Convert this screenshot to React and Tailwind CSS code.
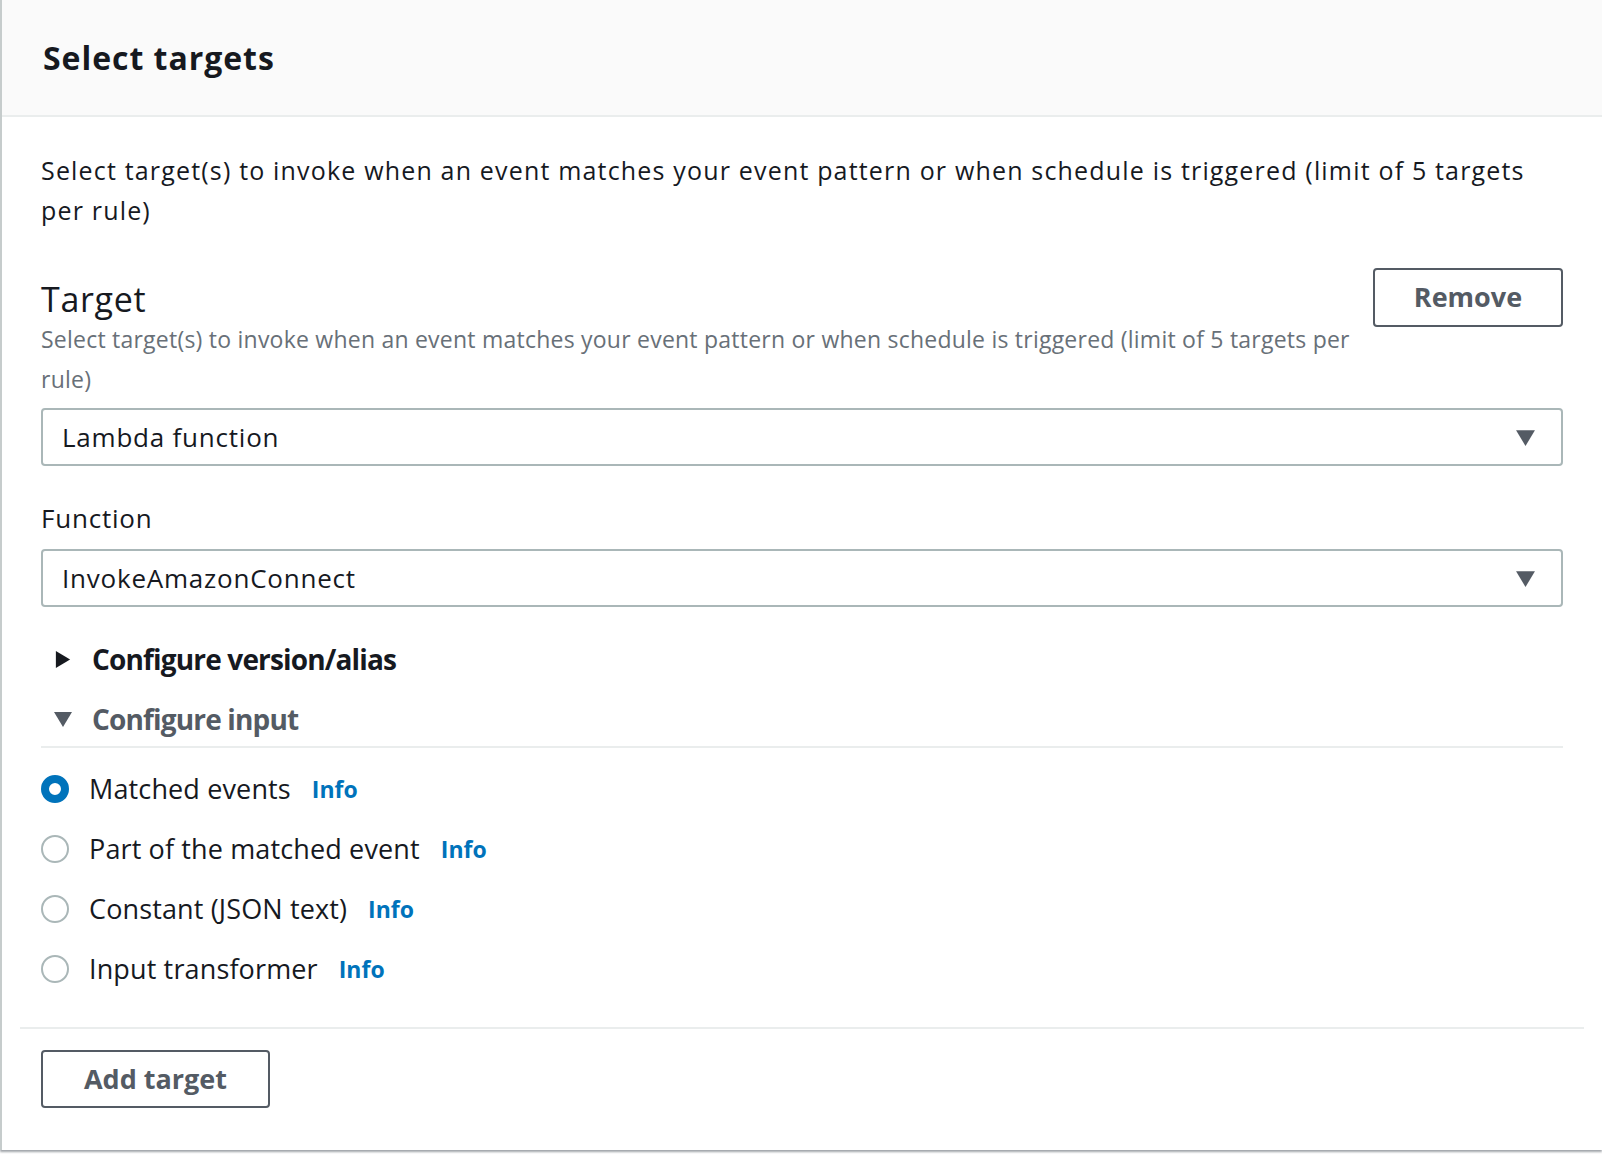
import React from 'react';

const Caret = ({ dir = 'down', className = '' }) => (
  <svg viewBox="0 0 20 20" className={className} aria-hidden="true">
    {dir === 'down' ? <path d="M1 3h18L10 18z" fill="currentColor" /> : <path d="M3 1v18l15-9z" fill="currentColor" />}
  </svg>
);

function Select({ value }) {
  return (
    <div className="h-[58px] flex items-center justify-between rounded-[4px] border-2 border-[#aab7b8] bg-white pl-[19px] pr-[25px]">
      <span className="text-[26px] tracking-[0.03em] text-[#16191f]">{value}</span>
      <Caret className="w-[21px] h-[21px] text-[#545b64]" />
    </div>
  );
}

function Radio({ label, checked }) {
  return (
    <div className="flex items-center h-[40px]">
      {checked ? (
        <span className="w-[28px] h-[28px] rounded-full border-[8px] border-[#0073bb] bg-white shrink-0" />
      ) : (
        <span className="w-[28px] h-[28px] rounded-full border-2 border-[#aab7b8] bg-white shrink-0" />
      )}
      <span className="ml-[20px] text-[27px] tracking-[0.005em] text-[#16191f]">{label}</span>
      <a className="ml-[21px] text-[23px] font-bold text-[#0073bb]">Info</a>
    </div>
  );
}

export default function App() {
  const options = [
    { label: 'Matched events', checked: true },
    { label: 'Part of the matched event' },
    { label: 'Constant (JSON text)' },
    { label: 'Input transformer' },
  ];

  return (
    <div className="w-[1602px] h-[1154px] bg-white font-['Open_Sans',sans-serif]">
      <div className="h-[1150px] flex flex-col border-l-2 border-[#c6cccc] shadow-[0_2px_2px_rgba(84,91,100,0.55)] bg-white">
        {/* header */}
        <div className="h-[117px] shrink-0 flex items-center px-[41px] bg-[#fafafa] border-b-2 border-[#eaeded]">
          <h2 className="text-[32px] font-bold tracking-[0.03em] text-[#16191f] leading-none">Select targets</h2>
        </div>

        {/* body */}
        <div className="px-[39px] pt-[33px]">
          <p className="text-[25px] leading-[40px] tracking-[0.047em] text-[#16191f]">
            Select target(s) to invoke when an event matches your event pattern or when schedule is triggered (limit of 5 targets per rule)
          </p>

          <div className="mt-[38px] flex justify-between items-start">
            <div className="flex-1 pt-[11px] pr-[6px]">
              <h3 className="text-[34px] leading-[40px] tracking-[0.02em] text-[#16191f]">Target</h3>
              <p className="text-[23px] leading-[40px] tracking-[0.01em] text-[#687078]">
                Select target(s) to invoke when an event matches your event pattern or when schedule is triggered (limit of 5 targets per rule)
              </p>
            </div>
            <button className="w-[190px] h-[59px] shrink-0 rounded-[4px] border-2 border-[#545b64] text-[27px] font-bold text-[#545b64]">
              Remove
            </button>
          </div>

          <div className="mt-[9px]">
            <Select value="Lambda function" />
          </div>

          <div className="mt-[32px] text-[26px] leading-[40px] tracking-[0.03em] text-[#16191f]">Function</div>
          <div className="mt-[11px]">
            <Select value="InvokeAmazonConnect" />
          </div>

          <div className="mt-[32px] flex items-center h-[40px]">
            <Caret dir="right" className="ml-[12px] w-[19px] h-[19px] text-[#16191f]" />
            <span className="ml-[20px] text-[28px] font-bold tracking-[-0.03em] text-[#16191f]">Configure version/alias</span>
          </div>
          <div className="mt-[20px] flex items-center h-[40px]">
            <Caret className="ml-[12px] w-[20px] h-[20px] text-[#545b64]" />
            <span className="ml-[19px] text-[28px] font-bold tracking-[-0.03em] text-[#545b64]">Configure input</span>
          </div>
          <div className="mt-[7px] h-[2px] bg-[#eaeded]" />

          <div className="mt-[21px] flex flex-col gap-[20px]">
            {options.map((o) => (
              <Radio key={o.label} label={o.label} checked={o.checked} />
            ))}
          </div>
        </div>

        {/* footer */}
        <div className="mt-[38px] mx-[18px] h-[2px] bg-[#eaeded]" />
        <div className="px-[39px] pt-[21px]">
          <button className="w-[229px] h-[58px] rounded-[4px] border-2 border-[#545b64] text-[27px] font-bold text-[#545b64]">
            Add target
          </button>
        </div>
      </div>
    </div>
  );
}
